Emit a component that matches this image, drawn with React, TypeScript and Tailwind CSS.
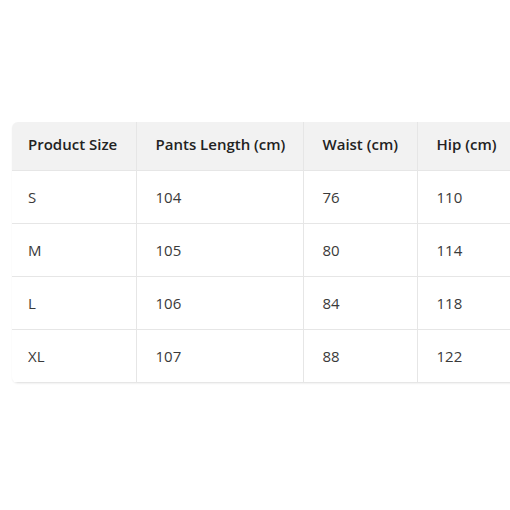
const rows = [
  ["S", "104", "76", "110"],
  ["M", "105", "80", "114"],
  ["L", "106", "84", "118"],
  ["XL", "107", "88", "122"],
];

const headers = ["Product Size", "Pants Length (cm)", "Waist (cm)", "Hip (cm)"];
const widths = ["w-[124px]", "w-[167px]", "w-[114px]", "w-[130px]"];

export default function App() {
  return (
    <div className="w-[510px] h-[510px] overflow-hidden bg-white pl-[12px] pt-[122px] font-['Open_Sans',sans-serif]">
      <div className="w-[535px] rounded-md overflow-hidden shadow-[0_1px_2px_rgba(0,0,0,0.06)]">
        <table className="table-fixed border-collapse text-[15px]">
          <thead>
            <tr className="bg-[#f2f2f2]">
              {headers.map((h, i) => (
                <th
                  key={h}
                  className={`${widths[i]} h-[48px] pr-4 pb-[3px] text-left font-semibold text-[#222] border-b border-[#e6e6e6] ${i > 0 ? "border-l pl-[19px]" : "pl-4"}`}
                >
                  {h}
                </th>
              ))}
            </tr>
          </thead>
          <tbody>
            {rows.map((r, ri) => (
              <tr key={ri}>
                {r.map((c, i) => (
                  <td
                    key={i}
                    className={`h-[53px] pr-4 pt-[2px] text-left text-[#3a3a3a] border-b border-[#e6e6e6] ${i > 0 ? "border-l pl-[19px]" : "pl-4"}`}
                  >
                    {c}
                  </td>
                ))}
              </tr>
            ))}
          </tbody>
        </table>
      </div>
    </div>
  );
}
